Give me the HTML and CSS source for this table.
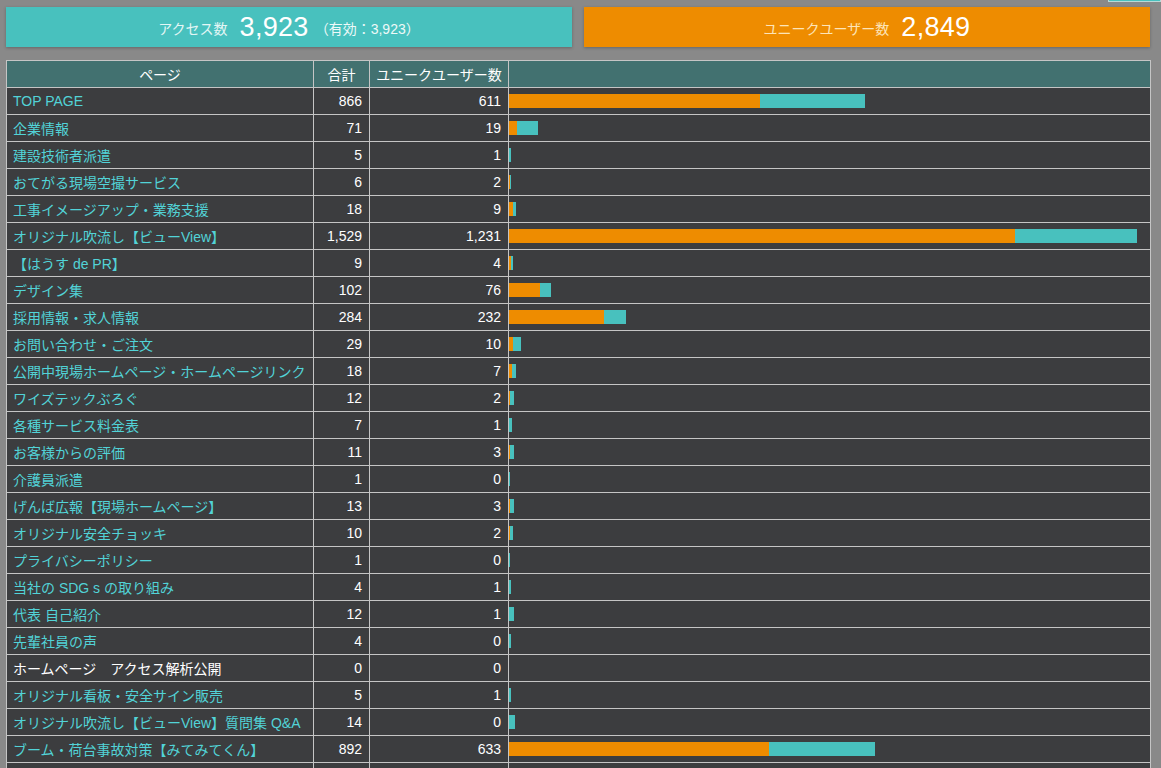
FILE: index.html
```html
<!DOCTYPE html>
<html lang="ja">
<head>
<meta charset="utf-8">
<title>アクセス解析</title>
<link rel="stylesheet" href="styles.css">
</head>
<body>
<div class="corner-tab"></div>
<div class="page">
  <div class="summary">
    <div class="stat stat-access">
      <span class="stat-label">アクセス数</span>
      <span class="stat-value">3,923</span>
      <span class="stat-note">（有効：3,923）</span>
    </div>
    <div class="stat stat-unique">
      <span class="stat-label">ユニークユーザー数</span>
      <span class="stat-value">2,849</span>
    </div>
  </div>

  <table class="report">
    <colgroup>
      <col class="c-page"><col class="c-total"><col class="c-unique"><col class="c-bar">
    </colgroup>
    <thead>
      <tr><th>ページ</th><th>合計</th><th>ユニークユーザー数</th><th></th></tr>
    </thead>
    <tbody>
      <tr><td><a href="#">TOP PAGE</a></td><td class="num">866</td><td class="num">611</td><td class="barcell"><div class="bar"><span class="seg-u" style="width:251.0px"></span><span class="seg-r" style="width:104.7px"></span></div></td></tr>
      <tr><td><a href="#">企業情報</a></td><td class="num">71</td><td class="num">19</td><td class="barcell"><div class="bar"><span class="seg-u" style="width:7.8px"></span><span class="seg-r" style="width:21.4px"></span></div></td></tr>
      <tr><td><a href="#">建設技術者派遣</a></td><td class="num">5</td><td class="num">1</td><td class="barcell"><div class="bar"><span class="seg-u" style="width:0.41px"></span><span class="seg-r" style="width:1.64px"></span></div></td></tr>
      <tr><td><a href="#">おてがる現場空撮サービス</a></td><td class="num">6</td><td class="num">2</td><td class="barcell"><div class="bar"><span class="seg-u" style="width:0.82px"></span><span class="seg-r" style="width:1.64px"></span></div></td></tr>
      <tr><td><a href="#">工事イメージアップ・業務支援</a></td><td class="num">18</td><td class="num">9</td><td class="barcell"><div class="bar"><span class="seg-u" style="width:3.7px"></span><span class="seg-r" style="width:3.7px"></span></div></td></tr>
      <tr><td><a href="#">オリジナル吹流し【ビューView】</a></td><td class="num">1,529</td><td class="num">1,231</td><td class="barcell"><div class="bar"><span class="seg-u" style="width:505.6px"></span><span class="seg-r" style="width:122.4px"></span></div></td></tr>
      <tr><td><a href="#">【はうす de PR】</a></td><td class="num">9</td><td class="num">4</td><td class="barcell"><div class="bar"><span class="seg-u" style="width:1.64px"></span><span class="seg-r" style="width:2.05px"></span></div></td></tr>
      <tr><td><a href="#">デザイン集</a></td><td class="num">102</td><td class="num">76</td><td class="barcell"><div class="bar"><span class="seg-u" style="width:31.2px"></span><span class="seg-r" style="width:10.7px"></span></div></td></tr>
      <tr><td><a href="#">採用情報・求人情報</a></td><td class="num">284</td><td class="num">232</td><td class="barcell"><div class="bar"><span class="seg-u" style="width:95.3px"></span><span class="seg-r" style="width:21.4px"></span></div></td></tr>
      <tr><td><a href="#">お問い合わせ・ご注文</a></td><td class="num">29</td><td class="num">10</td><td class="barcell"><div class="bar"><span class="seg-u" style="width:4.1px"></span><span class="seg-r" style="width:7.8px"></span></div></td></tr>
      <tr><td><a href="#">公開中現場ホームページ・ホームページリンク</a></td><td class="num">18</td><td class="num">7</td><td class="barcell"><div class="bar"><span class="seg-u" style="width:2.87px"></span><span class="seg-r" style="width:4.52px"></span></div></td></tr>
      <tr><td><a href="#">ワイズテックぶろぐ</a></td><td class="num">12</td><td class="num">2</td><td class="barcell"><div class="bar"><span class="seg-u" style="width:0.82px"></span><span class="seg-r" style="width:4.1px"></span></div></td></tr>
      <tr><td><a href="#">各種サービス料金表</a></td><td class="num">7</td><td class="num">1</td><td class="barcell"><div class="bar"><span class="seg-u" style="width:0.41px"></span><span class="seg-r" style="width:2.46px"></span></div></td></tr>
      <tr><td><a href="#">お客様からの評価</a></td><td class="num">11</td><td class="num">3</td><td class="barcell"><div class="bar"><span class="seg-u" style="width:1.23px"></span><span class="seg-r" style="width:3.29px"></span></div></td></tr>
      <tr><td><a href="#">介護員派遣</a></td><td class="num">1</td><td class="num">0</td><td class="barcell"><div class="bar"><span class="seg-u" style="width:0px"></span><span class="seg-r" style="width:0.41px"></span></div></td></tr>
      <tr><td><a href="#">げんば広報【現場ホームページ】</a></td><td class="num">13</td><td class="num">3</td><td class="barcell"><div class="bar"><span class="seg-u" style="width:1.23px"></span><span class="seg-r" style="width:4.1px"></span></div></td></tr>
      <tr><td><a href="#">オリジナル安全チョッキ</a></td><td class="num">10</td><td class="num">2</td><td class="barcell"><div class="bar"><span class="seg-u" style="width:0.82px"></span><span class="seg-r" style="width:3.29px"></span></div></td></tr>
      <tr><td><a href="#">プライバシーポリシー</a></td><td class="num">1</td><td class="num">0</td><td class="barcell"><div class="bar"><span class="seg-u" style="width:0px"></span><span class="seg-r" style="width:0.41px"></span></div></td></tr>
      <tr><td><a href="#">当社の SDG s の取り組み</a></td><td class="num">4</td><td class="num">1</td><td class="barcell"><div class="bar"><span class="seg-u" style="width:0.41px"></span><span class="seg-r" style="width:1.23px"></span></div></td></tr>
      <tr><td><a href="#">代表 自己紹介</a></td><td class="num">12</td><td class="num">1</td><td class="barcell"><div class="bar"><span class="seg-u" style="width:0.41px"></span><span class="seg-r" style="width:4.52px"></span></div></td></tr>
      <tr><td><a href="#">先輩社員の声</a></td><td class="num">4</td><td class="num">0</td><td class="barcell"><div class="bar"><span class="seg-u" style="width:0px"></span><span class="seg-r" style="width:1.64px"></span></div></td></tr>
      <tr><td><span class="plain">ホームページ　アクセス解析公開</span></td><td class="num">0</td><td class="num">0</td><td class="barcell"><div class="bar"></div></td></tr>
      <tr><td><a href="#">オリジナル看板・安全サイン販売</a></td><td class="num">5</td><td class="num">1</td><td class="barcell"><div class="bar"><span class="seg-u" style="width:0.41px"></span><span class="seg-r" style="width:1.64px"></span></div></td></tr>
      <tr><td><a href="#">オリジナル吹流し【ビューView】質問集 Q&amp;A</a></td><td class="num">14</td><td class="num">0</td><td class="barcell"><div class="bar"><span class="seg-u" style="width:0px"></span><span class="seg-r" style="width:5.75px"></span></div></td></tr>
      <tr><td><a href="#">ブーム・荷台事故対策【みてみてくん】</a></td><td class="num">892</td><td class="num">633</td><td class="barcell"><div class="bar"><span class="seg-u" style="width:260.0px"></span><span class="seg-r" style="width:106.4px"></span></div></td></tr>
      <tr class="more"><td></td><td></td><td></td><td></td></tr>
    </tbody>
  </table>
</div>
</body>
</html>
```

FILE: styles.css
```css
* { box-sizing: border-box; }

html, body {
  margin: 0;
  padding: 0;
  background: #898989;
  font-family: "Liberation Sans", Arial, "Noto Sans CJK JP", sans-serif;
  color: #ffffff;
  overflow: hidden;
}

.corner-tab {
  position: absolute;
  top: -30px;
  right: 0;
  width: 53px;
  height: 32px;
  background: #48c1be;
  border: 1px solid #b9d9d8;
}

.page {
  padding: 7px 0 0 6px;
  width: 1150px;
}

.summary {
  display: grid;
  grid-template-columns: 566px 566px;
  column-gap: 12px;
  height: 40px;
}

.stat {
  display: flex;
  align-items: center;
  justify-content: center;
  box-shadow: 0 1px 3px rgba(0, 0, 0, 0.25);
}

.stat-access { background: #48c1be; }
.stat-unique { background: #ee8c00; }

.stat-label {
  font-size: 14px;
  color: #e3f6f5;
  margin-right: 12px;
  margin-top: 2px;
}

.stat-unique .stat-label { color: #fde4b8; }

.stat-value {
  font-size: 27px;
  color: #ffffff;
  letter-spacing: 0.3px;
}

.stat-note {
  font-size: 14px;
  color: #eef9f8;
  margin-left: 6px;
  margin-top: 2px;
}

.report {
  margin-top: 13px;
  width: 1144px;
  table-layout: fixed;
  border-collapse: collapse;
  border: 1px solid #c5c5c5;
  font-size: 14px;
}

.c-page { width: 307px; }
.c-total { width: 56px; }
.c-unique { width: 139px; }
.c-bar { width: 642px; }

.report th,
.report td {
  border: 1px solid #c5c5c5;
  height: 27px;
  padding: 0 6px;
  white-space: nowrap;
  overflow: hidden;
  font-weight: normal;
}

.report th {
  background: #427170;
  color: #ffffff;
  text-align: center;
}

.report td {
  background: #3c3d3f;
  color: #ffffff;
}

.report td.num {
  text-align: right;
  padding-right: 7px;
}

.report td.barcell {
  padding: 0;
}

.report a {
  color: #52d3d7;
  text-decoration: none;
}

.report .plain {
  color: #ffffff;
}

.bar {
  display: flex;
  height: 14px;
}

.seg-u {
  display: block;
  height: 100%;
  background: #ee8c00;
}

.seg-r {
  display: block;
  height: 100%;
  background: #48c1be;
}
```
